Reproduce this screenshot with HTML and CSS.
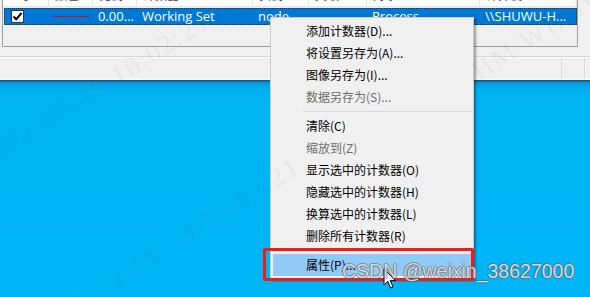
FILE: index.html
```html
<!DOCTYPE html>
<html>
<head>
<meta charset="utf-8">
<link rel="stylesheet" href="styles.css">
</head>
<body>
<div class="screen">
  <div class="window">
    <div class="list">
      <div class="header">
        <div class="hc"><span>显示</span></div>
        <div class="hc"><span>颜色</span></div>
        <div class="hc"><span>比例</span></div>
        <div class="hc"><span>计数器</span></div>
        <div class="hc"><span>实例</span></div>
        <div class="hc"><span>父级</span></div>
        <div class="hc"><span>对象</span></div>
        <div class="hc"><span>计算机</span></div>
      </div>
      <div class="row">
        <div class="cell"><span class="check"><svg width="11" height="11" viewBox="0 0 11 11"><path d="M1.5 5.5 L4.2 8.3 L9.5 2" fill="none" stroke="#000" stroke-width="2"/></svg></span></div>
        <div class="cell"><span class="swatch"></span></div>
        <div class="cell">0.00...</div>
        <div class="cell">Working Set</div>
        <div class="cell">node</div>
        <div class="cell"></div>
        <div class="cell">Process</div>
        <div class="cell">\\SHUWU-H...</div>
      </div>
    </div>
    <div class="status">
      <div class="panel wide"></div>
      <div class="panel mid"></div>
      <div class="panel end"></div>
    </div>
  </div>
  <div class="desktop"></div>

  <div class="menu">
    <div class="item">添加计数器(D)...</div>
    <div class="item">将设置另存为(A)...</div>
    <div class="item">图像另存为(I)...</div>
    <div class="item disabled">数据另存为(S)...</div>
    <div class="sep"></div>
    <div class="item">清除(C)</div>
    <div class="item disabled">缩放到(Z)</div>
    <div class="item">显示选中的计数器(O)</div>
    <div class="item">隐藏选中的计数器(H)</div>
    <div class="item">换算选中的计数器(L)</div>
    <div class="item">删除所有计数器(R)</div>
    <div class="sep"></div>
    <div class="item hover">属性(P)...</div>
  </div>
  <div class="redbox"></div>

  <div class="wm wm1">2022-09-19 18:02:21</div>
  <div class="wm wm2">2022-09-19 18:02:21</div>
  <div class="wm wm3">HM WIN10</div>

  <svg class="cursor" width="14" height="22" viewBox="0 0 14 22"><path d="M1 1 L1 17 L4.8 13.4 L7.6 20 L10 19 L7.3 12.6 L12.5 12.6 Z" fill="#fff" stroke="#000" stroke-width="1" stroke-linejoin="round"/></svg>
  <div class="csdn">CSDN @weixin_38627000</div>
</div>
</body>
</html>
```
FILE: styles.css
```css
* { box-sizing: border-box; }
html, body { margin: 0; padding: 0; }
body { width: 590px; height: 297px; overflow: hidden; background: #00b4f3; }

.screen {
  position: relative;
  width: 590px;
  height: 297px;
  overflow: hidden;
  display: flex;
  flex-direction: column;
  font-family: "Noto Sans CJK SC", "Noto Sans", sans-serif;
}

.window {
  height: 81px;
  background: #f0f0f0;
  display: flex;
  flex-direction: column;
  border-bottom: 1px solid #1d4f70;
}

.list {
  margin-left: 2px;
  width: 576px;
  height: 47px;
  border: 1px solid #a0a0a0;
  border-top: none;
  background: #f0f0f0;
  display: flex;
  flex-direction: column;
}

.header {
  height: 7px;
  overflow: hidden;
  background: #fff;
  display: grid;
  grid-template-columns: 46px 44px 44px 116px 56px 58px 113px 1fr;
  border-bottom: 1px solid #e5e5e5;
}
.hc {
  border-right: 1px solid #e5e5e5;
  padding-left: 6px;
  overflow: hidden;
}
.hc span {
  display: block;
  margin-top: -11px;
  font-size: 12px;
  line-height: 12px;
  color: #444;
}

.row {
  margin-top: 1px;
  margin-left: 1px;
  height: 17px;
  width: 573px;
  background: #0078d7;
  border: 1px dotted #3a2a10;
  display: grid;
  grid-template-columns: 44px 44px 44px 116px 56px 58px 113px 1fr;
  align-items: center;
  color: #fff;
  font-family: "Open Sans", "Noto Sans", sans-serif;
  font-size: 13px;
  line-height: 15px;
  white-space: nowrap;
  overflow: hidden;
}
.cell { padding-left: 5px; overflow: hidden; }
.check {
  display: flex;
  align-items: center;
  justify-content: center;
  width: 13px;
  height: 13px;
  margin-left: 1px;
  background: #fff;
  border: 1px solid #333;
}
.swatch {
  display: block;
  height: 1px;
  width: 36px;
  margin-left: -1px;
  background: #d01010;
}

.status {
  margin-top: 9px;
  height: 24px;
  border-top: 1px solid #d4d4d4;
  display: flex;
}
.panel {
  border-top: 1px solid #fbfbfb;
  border-bottom: 2px solid #f8f8f8;
}
.panel.wide { width: 562px; border-right: 1px solid #dadada; }
.panel.mid { width: 23px; border-right: 1px solid #dadada; }
.panel.end { flex: 1; }

.desktop {
  flex: 1;
  background: linear-gradient(#0a73b0 0px, #0898dc 2px, #02aeee 7px, #00b4f4 18px, #00b5f5 100%);
}

.menu {
  position: absolute;
  left: 270px;
  top: 17px;
  width: 204px;
  padding: 2px;
  background: #f0f0f0;
  border: 1px solid #cccccc;
  box-shadow: 2px 2px 2px rgba(0, 0, 0, 0.35);
  font-size: 12px;
  color: #000;
  display: flex;
  flex-direction: column;
}
.item {
  height: 22px;
  line-height: 22px;
  padding-left: 33px;
  white-space: nowrap;
}
.item.disabled { color: #6d6d6d; }
.item.hover { background: #91c9f7; }
.sep {
  height: 7px;
  display: flex;
  align-items: center;
  padding-left: 30px;
}
.sep::after {
  content: "";
  display: block;
  height: 1px;
  width: 100%;
  background: #d7d7d7;
}

.redbox {
  position: absolute;
  left: 263px;
  top: 248px;
  width: 211px;
  height: 33px;
  border: 3px solid #f01c1c;
  border-radius: 2px;
}

.wm {
  position: absolute;
  font-family: "Liberation Serif", serif;
  font-size: 27px;
  letter-spacing: 2px;
  color: rgba(70, 70, 70, 0.065);
  white-space: nowrap;
  transform-origin: 0 100%;
  transform: rotate(-32.5deg);
  line-height: 27px;
}
.wm1 { left: -10px; top: 146px; }
.wm2 { left: 80px; top: 292px; }
.wm3 { left: 482px; top: 58px; }

.csdn {
  position: absolute;
  left: 342px;
  top: 259px;
  font-family: "Liberation Sans", Arial, sans-serif;
  font-size: 19.5px;
  line-height: 24px;
  color: rgba(235, 235, 235, 0.88);
  text-shadow: 1px 0 0 rgba(90, 90, 90, 0.55), -1px 0 0 rgba(90, 90, 90, 0.55), 0 1px 0 rgba(90, 90, 90, 0.55), 0 -1px 0 rgba(90, 90, 90, 0.55);
  white-space: nowrap;
}

.cursor {
  position: absolute;
  left: 383px;
  top: 268px;
}
```
